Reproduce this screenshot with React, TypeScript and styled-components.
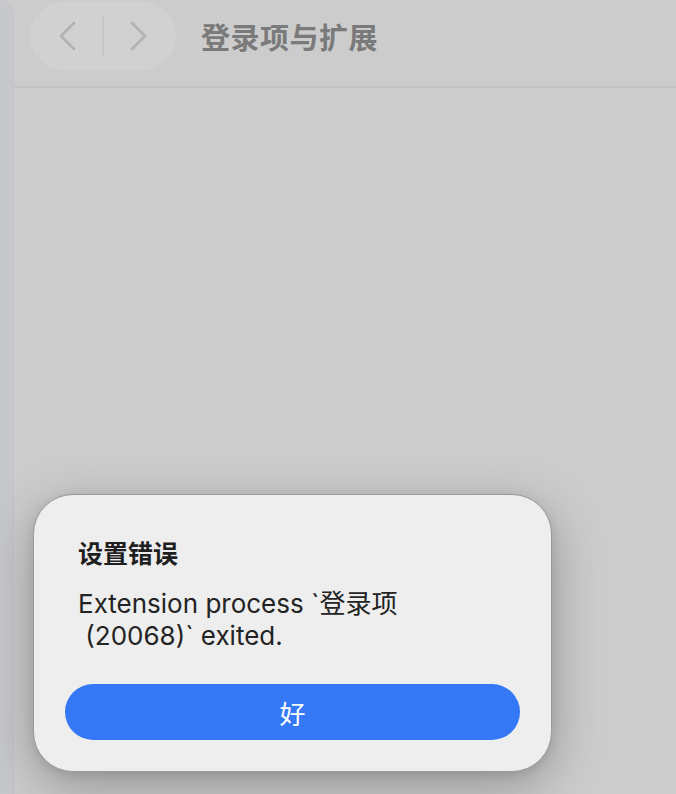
import * as React from "react";
import styled, { createGlobalStyle } from "styled-components";

const GlobalStyle = createGlobalStyle`
  html, body {
    margin: 0;
    padding: 0;
    background: #cccccc;
  }
  body {
    font-family: Inter, "Noto Sans CJK SC", sans-serif;
    -webkit-font-smoothing: antialiased;
  }
`;

const Window = styled.div`
  position: relative;
  display: flex;
  width: 676px;
  height: 794px;
  overflow: hidden;
  background: #cccccc;
`;

const Sidebar = styled.div`
  width: 13px;
  flex-shrink: 0;
  background: #c7c8cb;
  border-top-right-radius: 14px;
  border-right: 1px solid #c3c4c6;
`;

const Main = styled.div`
  flex: 1;
  display: flex;
  flex-direction: column;
`;

const Header = styled.div`
  height: 88px;
  box-sizing: border-box;
  display: flex;
  align-items: center;
  padding: 0 0 14px 16px;
  gap: 25px;
  border-bottom: 2px solid #c4c4c4;
`;

const NavPill = styled.div`
  width: 146px;
  height: 68px;
  border-radius: 34px;
  background: #d1d1d1;
  display: flex;
  align-items: center;
  justify-content: space-between;
  padding: 0 28px;
  box-sizing: border-box;
`;

const NavDivider = styled.div`
  width: 2px;
  height: 40px;
  background: #c6c6c6;
`;

const Title = styled.h1`
  margin: 0;
  font-family: "Noto Sans CJK SC", sans-serif;
  font-size: 29px;
  font-weight: 700;
  color: #7a7a7a;
  letter-spacing: 0.5px;
`;

const Content = styled.div`
  flex: 1;
`;

const Dialog = styled.div`
  position: absolute;
  left: 33px;
  top: 494px;
  width: 519px;
  height: 278px;
  box-sizing: border-box;
  background: #eeeeee;
  border: 1px solid #9a9a9a;
  border-radius: 40px;
  box-shadow: 0 14px 50px rgba(0, 0, 0, 0.28), 0 2px 10px rgba(0, 0, 0, 0.1);
  padding: 41px 31px 31px;
  display: flex;
  flex-direction: column;
`;

const DialogTitle = styled.div`
  padding-left: 13px;
  font-family: "Noto Sans CJK SC", sans-serif;
  font-size: 25px;
  line-height: 32px;
  font-weight: 700;
  color: #1f1f1f;
`;

const DialogText = styled.div`
  margin-top: 20px;
  padding-left: 13px;
  white-space: nowrap;
  font-size: 26px;
  line-height: 32px;
  color: #232323;
`;

const OkButton = styled.button`
  margin-top: auto;
  height: 56px;
  border: none;
  border-radius: 28px;
  background: #3478f6;
  color: #ffffff;
  font-family: "Noto Sans CJK SC", sans-serif;
  font-size: 26px;
  cursor: pointer;
`;

const Chevron = ({ dir }: { dir: "left" | "right" }) => (
  <svg width="19" height="30" viewBox="0 0 19 30" fill="none">
    <path
      d={dir === "left" ? "M16 2 L3 15 L16 28" : "M3 2 L16 15 L3 28"}
      stroke="#b2b2b2"
      strokeWidth="2.6"
      strokeLinecap="round"
      strokeLinejoin="round"
    />
  </svg>
);

export default function App() {
  return (
    <>
      <GlobalStyle />
      <Window>
        <Sidebar />
        <Main>
          <Header>
            <NavPill>
              <Chevron dir="left" />
              <NavDivider />
              <Chevron dir="right" />
            </NavPill>
            <Title>登录项与扩展</Title>
          </Header>
          <Content />
        </Main>
        <Dialog>
          <DialogTitle>设置错误</DialogTitle>
          <DialogText>
            Extension process `登录项
            <br />
            &nbsp;(20068)` exited.
          </DialogText>
          <OkButton>好</OkButton>
        </Dialog>
      </Window>
    </>
  );
}
